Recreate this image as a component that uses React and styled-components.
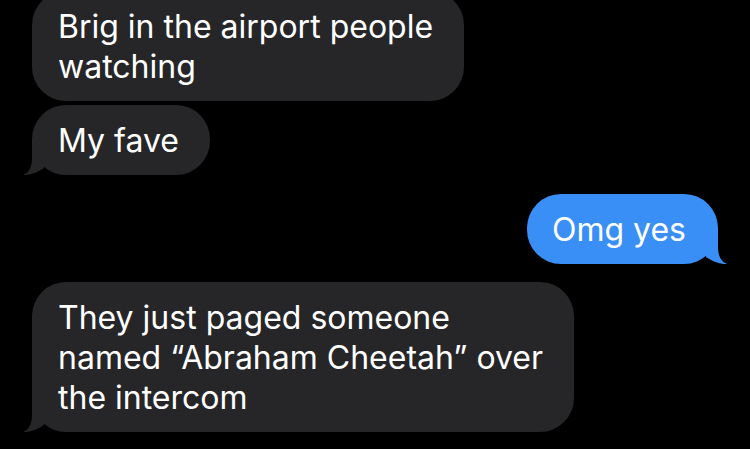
import React from "react";
import styled, { createGlobalStyle } from "styled-components";

const GlobalStyle = createGlobalStyle`
	* { box-sizing: border-box; }
	html, body { margin: 0; padding: 0; background: #000; }
	body {
		font-family: Inter, "Noto Sans", "Liberation Sans", sans-serif;
		-webkit-font-smoothing: antialiased;
	}
`;

const Screen = styled.main`
	width: 750px;
	height: 449px;
	overflow: hidden;
	background: #000;
	display: flex;
	flex-direction: column;
	padding: 0 32px;
`;

const Row = styled.div`
	display: flex;
	justify-content: ${p => (p.$mine ? "flex-end" : "flex-start")};
	margin-top: ${p => p.$gap}px;
	flex-shrink: 0;
`;

const Bubble = styled.div`
	position: relative;
	width: fit-content;
	padding: ${p => (p.$mine ? "16px 32px 14px 25px" : "16px 31px 14px 26px")};
	border-radius: 34px;
	background: ${p => (p.$mine ? "#3a8ff6" : "#262629")};
	color: #fff;
	font-size: 32px;
	line-height: 40px;
`;

const Line = styled.span`
	display: block;
	white-space: nowrap;
`;

const Tail = styled.svg`
	position: absolute;
	bottom: 0;
	width: 40px;
	height: 34px;
	${p => (p.$mine ? "right: -9px; transform: scaleX(-1);" : "left: -9px;")}
	fill: ${p => (p.$mine ? "#3a8ff6" : "#262629")};
`;

const messages = [
	{ id: 1, mine: false, gap: -9, lines: ["Brig in the airport people", "watching"] },
	{ id: 2, mine: false, gap: 4, tail: true, lines: ["My fave"] },
	{ id: 3, mine: true, gap: 19, tail: true, lines: ["Omg yes"] },
	{ id: 4, mine: false, gap: 18, tail: true, lines: ["They just paged someone", "named \u201CAbraham Cheetah\u201D over", "the intercom"] },
];

const Message = ({ mine, gap, tail, lines }) => (
	<Row $mine={mine} $gap={gap}>
		<Bubble $mine={mine}>
			{lines.map((line, i) => (
				<Line key={i}>{line}</Line>
			))}
			{tail && (
				<Tail $mine={mine} viewBox="0 0 40 34">
					<path d="M9 0 L9 17 C9 27 5 32 0 34 C7 34.5 14 31.5 21 27 L21 0 Z" />
				</Tail>
			)}
		</Bubble>
	</Row>
);

const App = () => {
	return (
		<>
			<GlobalStyle />
			<Screen>
				{messages.map(m => (
					<Message key={m.id} {...m} />
				))}
			</Screen>
		</>
	);
};

export default App;
